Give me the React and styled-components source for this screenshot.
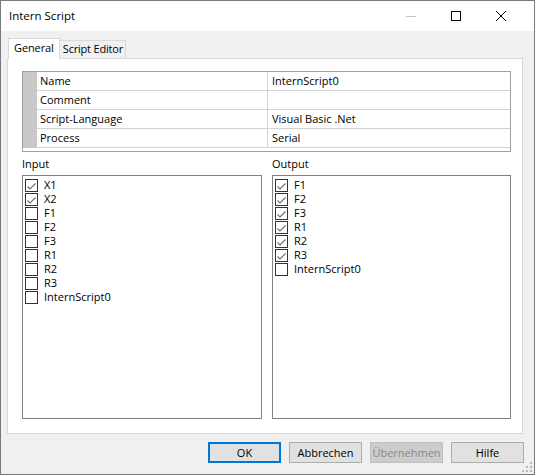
import React from "react";
import styled, { createGlobalStyle } from "styled-components";

const GlobalStyle = createGlobalStyle`
  html, body {
    margin: 0;
    padding: 0;
    background: #ffffff;
  }
  * {
    box-sizing: border-box;
  }
`;

const Window = styled.div`
  position: relative;
  width: 535px;
  height: 475px;
  border: 1px solid #7a7a7a;
  background: #f0f0f0;
  font-family: "Open Sans", "Noto Sans", sans-serif;
  font-size: 11px;
  color: #000;
  display: flex;
  flex-direction: column;
`;

const TitleBar = styled.div`
  height: 30px;
  background: #ffffff;
  display: flex;
  align-items: center;
  padding-left: 8px;
`;

const Title = styled.div`
  flex: 1;
  font-size: 11.5px;
  padding-bottom: 1px;
`;

const Controls = styled.div`
  display: flex;
  height: 100%;
  padding-right: 11px;
`;

const Control = styled.div`
  width: 45px;
  height: 100%;
  display: flex;
  align-items: center;
  justify-content: center;
`;

const Body = styled.div`
  flex: 1;
  display: flex;
  flex-direction: column;
  padding: 7px 0 0 6px;
`;

const TabStrip = styled.div`
  height: 20px;
  display: flex;
  align-items: flex-end;
  padding-left: 1px;
`;

const Tab = styled.div`
  position: relative;
  z-index: ${(p) => (p.$active ? 1 : 0)};
  height: ${(p) => (p.$active ? "21px" : "18px")};
  margin-bottom: ${(p) => (p.$active ? "-1px" : "0")};
  margin-left: ${(p) => (p.$active ? "0" : "-1px")};
  padding: ${(p) => (p.$active ? "1px 5px 0 5px" : "0 2px 0 3px")};
  background: ${(p) => (p.$active ? "#ffffff" : "#f0f0f0")};
  border: 1px solid #d9d9d9;
  border-bottom: none;
  line-height: 16px;
  white-space: nowrap;
  letter-spacing: ${(p) => (p.$active ? "-0.1px" : "-0.2px")};
`;

const Panel = styled.div`
  width: 516px;
  height: 376px;
  background: #ffffff;
  border: 1px solid #d9d9d9;
  padding: 12px 0 0 14px;
  display: flex;
  flex-direction: column;
`;

const Grid = styled.div`
  width: 489px;
  height: 81px;
  border: 1px solid #a0a0a0;
  display: flex;
`;

const GridGutter = styled.div`
  width: 14px;
  height: 76px;
  background: #c8c8c8;
`;

const GridRows = styled.div`
  flex: 1;
  display: flex;
  flex-direction: column;
`;

const GridRow = styled.div`
  height: 19px;
  display: grid;
  grid-template-columns: 230px 1fr;
  border-bottom: 1px solid #d2d2d2;
`;

const GridCell = styled.div`
  line-height: 18px;
  padding-left: ${(p) => (p.$value ? "4px" : "3px")};
  border-left: ${(p) => (p.$value ? "1px solid #d2d2d2" : "none")};
  white-space: nowrap;
`;

const Lists = styled.div`
  display: flex;
  gap: 10px;
`;

const ListColumn = styled.div`
  width: ${(p) => p.$w}px;
  display: flex;
  flex-direction: column;
`;

const ListLabel = styled.div`
  height: 23px;
  padding-top: 4px;
  line-height: 15px;
`;

const ListBox = styled.div`
  height: 244px;
  border: 1px solid #828282;
  padding: 2px 2px 0 2px;
`;

const Item = styled.div`
  height: 14px;
  display: flex;
  align-items: flex-start;
  gap: 6px;
`;

const Box = styled.div`
  width: 13px;
  height: 13px;
  margin-top: 1px;
  border: 1px solid #333333;
  background: #ffffff;
  flex-shrink: 0;
`;

const ItemText = styled.span`
  line-height: 13px;
  white-space: nowrap;
`;

const Footer = styled.div`
  display: flex;
  justify-content: flex-end;
  gap: 8px;
  padding: 8px 10px 0 0;
`;

const Button = styled.div`
  width: 73px;
  height: 21px;
  display: flex;
  align-items: center;
  justify-content: center;
  background: ${(p) => (p.$disabled ? "#cccccc" : "#e1e1e1")};
  border: ${(p) =>
    p.$default ? "2px solid #0078d7" : p.$disabled ? "1px solid #bfbfbf" : "1px solid #adadad"};
  color: ${(p) => (p.$disabled ? "#8a8a8a" : "#000")};
  padding-bottom: 1px;
`;

const Grip = styled.svg`
  position: absolute;
  right: 1px;
  bottom: 1px;
`;

const CheckBox = ({ checked }) => (
  <Box>
    {checked && (
      <svg width="11" height="11" viewBox="0 0 11 11">
        <polyline
          points="1.5,5.5 4,8 9.5,2.5"
          fill="none"
          stroke="#6b6b6b"
          strokeWidth="1.1"
        />
      </svg>
    )}
  </Box>
);

const props = [
  ["Name", "InternScript0"],
  ["Comment", ""],
  ["Script-Language", "Visual Basic .Net"],
  ["Process", "Serial"],
];

const inputs = [
  ["X1", true],
  ["X2", true],
  ["F1", false],
  ["F2", false],
  ["F3", false],
  ["R1", false],
  ["R2", false],
  ["R3", false],
  ["InternScript0", false],
];

const outputs = [
  ["F1", true],
  ["F2", true],
  ["F3", true],
  ["R1", true],
  ["R2", true],
  ["R3", true],
  ["InternScript0", false],
];

const CheckList = ({ label, items, width }) => (
  <ListColumn $w={width}>
    <ListLabel>{label}</ListLabel>
    <ListBox>
      {items.map(([name, checked]) => (
        <Item key={name}>
          <CheckBox checked={checked} />
          <ItemText>{name}</ItemText>
        </Item>
      ))}
    </ListBox>
  </ListColumn>
);

export default function App() {
  return (
    <>
      <GlobalStyle />
      <Window>
        <TitleBar>
          <Title>Intern Script</Title>
          <Controls>
            <Control>
              <svg width="10" height="10" viewBox="0 0 10 10">
                <line x1="0" y1="5.5" x2="10" y2="5.5" stroke="#c4c4c4" strokeWidth="1" />
              </svg>
            </Control>
            <Control>
              <svg width="10" height="10" viewBox="0 0 10 10">
                <rect x="0.5" y="0.5" width="9" height="9" fill="none" stroke="#000" strokeWidth="1" />
              </svg>
            </Control>
            <Control>
              <svg width="10" height="10" viewBox="0 0 10 10">
                <path d="M0 0 L10 10 M10 0 L0 10" stroke="#000" strokeWidth="1" />
              </svg>
            </Control>
          </Controls>
        </TitleBar>
        <Body>
          <TabStrip>
            <Tab $active>General</Tab>
            <Tab>Script Editor</Tab>
          </TabStrip>
          <Panel>
            <Grid>
              <GridGutter />
              <GridRows>
                {props.map(([k, v]) => (
                  <GridRow key={k}>
                    <GridCell>{k}</GridCell>
                    <GridCell $value>{v}</GridCell>
                  </GridRow>
                ))}
              </GridRows>
            </Grid>
            <Lists>
              <CheckList label="Input" items={inputs} width={240} />
              <CheckList label="Output" items={outputs} width={239} />
            </Lists>
          </Panel>
          <Footer>
            <Button $default>OK</Button>
            <Button>Abbrechen</Button>
            <Button $disabled>Übernehmen</Button>
            <Button>Hilfe</Button>
          </Footer>
        </Body>
        <Grip width="11" height="11" viewBox="0 0 11 11">
          {[
            [8, 0],
            [8, 4],
            [4, 4],
            [8, 8],
            [4, 8],
            [0, 8],
          ].map(([x, y]) => (
            <rect key={`${x}-${y}`} x={x} y={y} width="2" height="2" fill="#b9b9b9" />
          ))}
        </Grip>
      </Window>
    </>
  );
}
